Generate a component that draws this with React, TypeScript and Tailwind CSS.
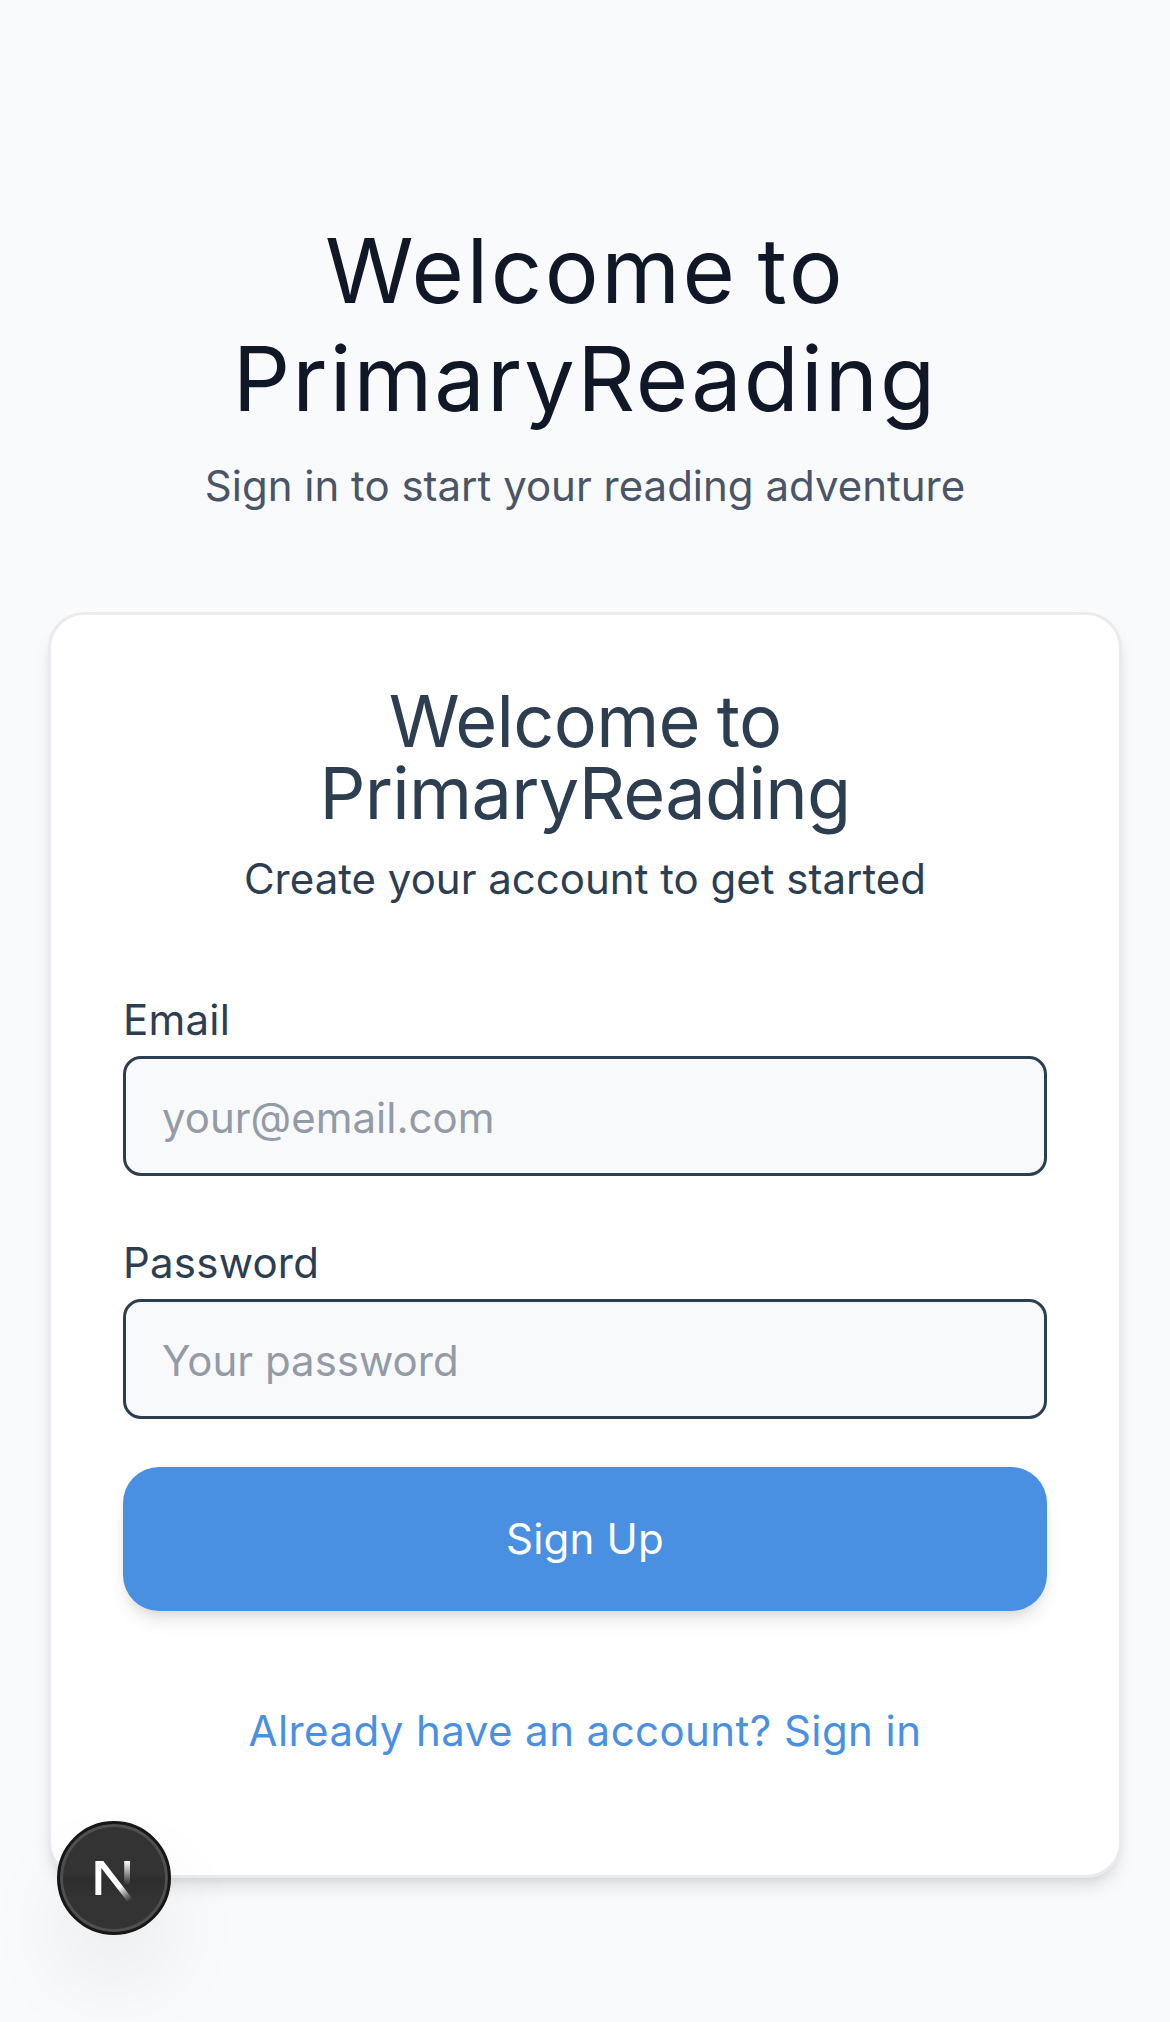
import React from "react";

function Field({ label, placeholder, type }: { label: string; placeholder: string; type: string }) {
  return (
    <div>
      <label className="block h-[72px] text-[42px] leading-[72px] tracking-[0.22px] text-[#2c3e50]">{label}</label>
      <input
        type={type}
        placeholder={placeholder}
        className="block h-[120px] w-full rounded-[18px] border-[3px] border-[#2c3e50] bg-[#f8f9fb] px-9 pt-[3px] text-[42px] outline-none placeholder:text-[#939ba6]"
      />
    </div>
  );
}

function DevBadge() {
  return (
    <div className="fixed bottom-[87px] left-[57px] flex h-[114px] w-[114px] items-center justify-center rounded-full border-[3px] border-[#171717] bg-linear-to-b from-[#333333] from-45% via-[#2d2d2d] via-52% to-[#333333] to-70% shadow-[inset_0_0_0_3px_#4f4f4f,0_3px_6px_rgba(0,0,0,0.02),0_48px_96px_-12px_rgba(0,0,0,0.10)]">
      <svg width="40" height="48" viewBox="0 0 40 48" fill="none">
        <defs>
          <linearGradient id="diag" x1="27" y1="32" x2="37" y2="46" gradientUnits="userSpaceOnUse">
            <stop stopColor="white" />
            <stop offset="1" stopColor="white" stopOpacity="0" />
          </linearGradient>
          <linearGradient id="stem" x1="33" y1="7" x2="33" y2="31" gradientUnits="userSpaceOnUse">
            <stop stopColor="white" />
            <stop offset="1" stopColor="white" stopOpacity="0" />
          </linearGradient>
        </defs>
        <rect x="30.2" y="7" width="5.8" height="24" fill="url(#stem)" />
        <path d="M1.4 7H9.3L39 45.5L34.4 48.8L7.3 14V41H1.4Z" fill="url(#diag)" />
      </svg>
    </div>
  );
}

export default function App() {
  return (
    <div className="flex h-[2022px] flex-col bg-[#f9fafc] px-12 pt-[217px] font-['Inter',sans-serif]">
      <header className="text-center">
        <h1 className="text-[90px] leading-[108px] text-[#101828]">
          <span className="block tracking-[2.5px] [word-spacing:-7.7px]">Welcome to</span>
          <span className="block tracking-[2.02px]">PrimaryReading</span>
        </h1>
        <p className="mt-[21px] text-[42px] leading-[63px] text-[#4a5565]">Sign in to start your reading adventure</p>
      </header>
      <main className="mt-[95px] h-[1266px] shrink-0 rounded-[36px] border-[3px] border-[#e9ebee] bg-white px-[72px] pt-[70px] shadow-[0_12px_18px_-3px_rgba(0,0,0,0.1),0_6px_12px_-6px_rgba(0,0,0,0.1)]">
        <div className="text-center text-[#2c3e50]">
          <h2 className="text-[72px] leading-[72px]">
            <span className="block tracking-[-0.7px] [word-spacing:-2.6px]">Welcome to</span>
            <span className="block tracking-[-0.7px]">PrimaryReading</span>
          </h2>
          <p className="mt-[18px] text-[42px] leading-[63px]">Create your account to get started</p>
        </div>
        <form className="mt-[74px]">
          <Field label="Email" placeholder="your@email.com" type="email" />
          <div className="mt-[51px]">
            <Field label="Password" placeholder="Your password" type="password" />
          </div>
          <button
            type="button"
            className="mt-12 block h-[144px] w-full rounded-[36px] bg-[#4a90e2] pb-[2px] text-[42px] tracking-[0.2px] text-white shadow-[0_12px_18px_-3px_rgba(0,0,0,0.1),0_6px_12px_-6px_rgba(0,0,0,0.1)]"
          >
            Sign Up
          </button>
        </form>
        <p className="mt-[88px] text-center text-[42px] leading-[63px] tracking-[0.43px] text-[#4a90e2]">Already have an account? Sign in</p>
      </main>
      <DevBadge />
    </div>
  );
}
